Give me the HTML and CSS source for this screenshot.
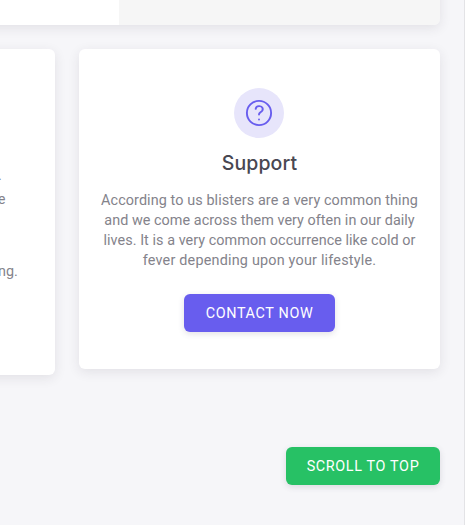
FILE: index.html
```html
<!DOCTYPE html>
<html lang="en">
<head>
<meta charset="utf-8">
<title>Support</title>
<link rel="stylesheet" href="styles.css">
</head>
<body>
<main class="page">
  <section class="banner"><div class="banner-main"></div><div class="banner-side"></div></section>
  <div class="cards">
    <article class="card card-left">
      <p class="tail tail-dot">.</p>
      <p class="tail tail-e">e</p>
      <p class="tail tail-ng">ng.</p>
    </article>
    <article class="card support">
      <div class="avatar">
        <svg width="30" height="30" viewBox="0 0 30 30" fill="none" stroke="#685dee" stroke-width="1.9" stroke-linecap="round" stroke-linejoin="round">
          <circle cx="15" cy="15" r="12.1"/>
          <path d="M11.7 10.9C12 7.5 17.5 7.2 18.6 10.1C19.5 12.7 17.3 13.9 16.1 14.6C15.2 15.2 15 15.8 15 16.6"/>
          <path d="M15 21.4v.1"/>
        </svg>
      </div>
      <h2 class="title">Support</h2>
      <p class="text"><span class="l1">According to us blisters are a very common thing</span><span class="l2">and we come across them very often in our daily</span><span class="l3">lives. It is a very common occurrence like cold or</span><span class="l4">fever depending upon your lifestyle.</span></p>
      <button class="btn contact">CONTACT NOW</button>
    </article>
  </div>
  <div class="bottom"><button class="btn top">SCROLL TO TOP</button></div>
</main>
</body>
</html>
```
FILE: styles.css
```css
* { box-sizing: border-box; }
body { margin: 0; background: #f6f6f9; font-family: Roboto, sans-serif; color: #84838b; overflow: hidden; }
.page { width: 465px; height: 525px; border-right: 1px solid #e3e3e6; padding-right: 24px; overflow: hidden; }
.banner { height: 55px; margin: -30px 0 0 -30px; display: flex; border-radius: 0 0 6px 0; overflow: hidden; box-shadow: 0 3px 12px rgba(47, 43, 61, .1); }
.banner-main { width: 149px; background: #fff; }
.banner-side { flex: 1; background: #f6f6f6; }
.page { display: flow-root; }
.cards { display: flex; align-items: flex-start; gap: 24px; margin-top: 24px; }
.card { background: #fff; border-radius: 6px; box-shadow: 0 3px 12px rgba(47, 43, 61, .1); }
.card-left { width: 85px; height: 326px; margin-left: -30px; padding: 117px 0 0 30px; }
.tail { margin: 0; font-size: 14.4px; line-height: 20px; }
.tail-dot { margin-left: -2px; }
.tail-e { margin: 3px 0 0 -2px; font-size: 14px; }
.tail-ng { margin: 53px 0 0 -2px; }
.support { width: 361px; height: 320px; padding-top: 39px; display: flex; flex-direction: column; align-items: center; }
.avatar { width: 50px; height: 50px; margin-right: 1px; border-radius: 50%; background: #e7e5fb; display: flex; align-items: center; justify-content: center; }
.title { margin: 12px 0 0; font: 500 19.5px/26px Inter, sans-serif; letter-spacing: .1px; color: #484751; }
.text { margin: 15px 0 23px; font-size: 14.4px; line-height: 20px; text-align: center; white-space: nowrap; }
.text span { display: block; }
.l1 { letter-spacing: .09px; }
.l2 { letter-spacing: .04px; }
.l3 { letter-spacing: .05px; }
.l4 { letter-spacing: .2px; }
.btn { display: block; height: 38px; padding: 1px 0 0; border: 0; border-radius: 6px; color: #fff; font: 400 14.4px/18px Roboto, sans-serif; letter-spacing: .64px; box-shadow: 0 2px 6px rgba(75, 70, 92, .16); }
.contact { width: 151px; background: #685dee; }
.bottom { display: flex; justify-content: flex-end; margin-top: 72px; }
.top { width: 154px; background: #27c165; }
```
